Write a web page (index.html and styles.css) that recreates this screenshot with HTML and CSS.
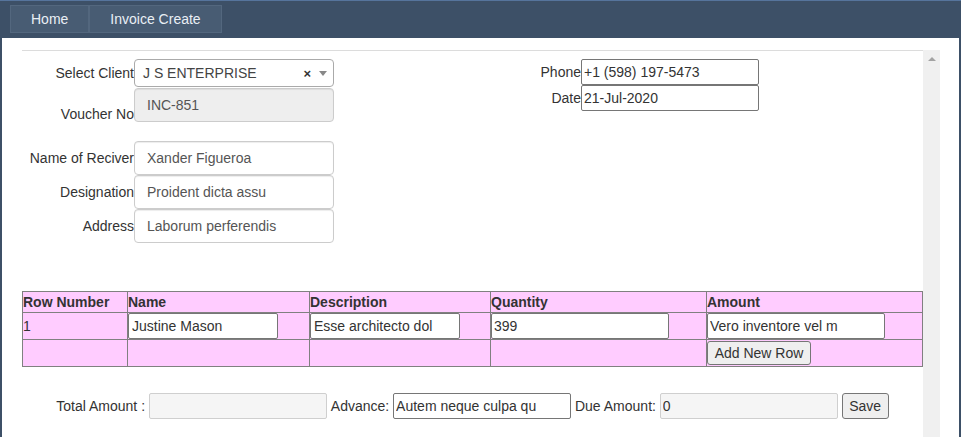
FILE: index.html
```html
<!DOCTYPE html>
<html>
<head>
<meta charset="utf-8">
<title>Invoice Create</title>
<link rel="stylesheet" href="styles.css">
</head>
<body>
<div class="frame">
  <nav class="topbar">
    <a class="tab">Home</a><a class="tab">Invoice Create</a>
  </nav>
  <div class="page">
    <div class="scroll">
      <div class="content">
        <div class="form-top">
          <div class="col-left">
            <div class="field f-client">
              <label class="lbl">Select Client</label>
              <div class="s2">
                <span class="s2-text">J S ENTERPRISE</span>
                <span class="s2-clear">×</span>
                <span class="s2-arrow"></span>
              </div>
            </div>
            <div class="field f-voucher">
              <label class="lbl lbl-bottom">Voucher No</label>
              <input class="fc fc-readonly" value="INC-851" readonly>
            </div>
            <div class="field f-first">
              <label class="lbl">Name of Reciver</label>
              <input class="fc" value="Xander Figueroa">
            </div>
            <div class="field">
              <label class="lbl">Designation</label>
              <input class="fc" value="Proident dicta assu">
            </div>
            <div class="field">
              <label class="lbl">Address</label>
              <input class="fc" value="Laborum perferendis">
            </div>
          </div>
          <div class="col-right">
            <div class="field">
              <label class="lbl lbl-r">Phone</label>
              <input class="pi pi-wide" value="+1 (598) 197-5473">
            </div>
            <div class="field">
              <label class="lbl lbl-r">Date</label>
              <input class="pi pi-wide" value="21-Jul-2020">
            </div>
          </div>
        </div>

        <table class="items">
          <colgroup>
            <col class="c1"><col class="c2"><col class="c3"><col class="c4"><col class="c5">
          </colgroup>
          <thead>
            <tr class="hrow">
              <th>Row Number</th><th>Name</th><th>Description</th><th>Quantity</th><th>Amount</th>
            </tr>
          </thead>
          <tbody>
            <tr class="drow">
              <td>1</td>
              <td><input class="pi pi-narrow" value="Justine Mason"></td>
              <td><input class="pi pi-narrow" value="Esse architecto dol"></td>
              <td><input class="pi pi-wide" value="399"></td>
              <td><input class="pi pi-wide" value="Vero inventore vel m"></td>
            </tr>
            <tr class="brow">
              <td></td><td></td><td></td><td></td>
              <td><button class="btn btn-add">Add New Row</button></td>
            </tr>
          </tbody>
        </table>

        <div class="totals">
          <label>Total Amount :</label> <input class="pi pi-wide pi-ro" readonly> <label>Advance:</label> <input class="pi pi-wide" value="Autem neque culpa qu"> <label>Due Amount:</label> <input class="pi pi-wide pi-ro" value="0" readonly> <button class="btn btn-save">Save</button>
        </div>
      </div>
    </div>
    <div class="vbar"><span class="vbar-up"></span></div>
  </div>
</div>
</body>
</html>
```

FILE: styles.css
```css
* { box-sizing: border-box; }
html, body { margin: 0; padding: 0; height: 100%; overflow: hidden; }
body {
  font-family: "Liberation Sans", Arial, sans-serif;
  font-size: 14px;
  color: #333;
  background: #fff;
}

.frame {
  height: 437px;
  display: flex;
  flex-direction: column;
  border-left: 2px solid #3d5067;
  border-right: 2px solid #3d5067;
}

.topbar {
  height: 38px;
  flex: none;
  background: #3d5067;
  border-top: 1px solid #56749c;
  padding: 4px 0 0 10px;
  margin: 0 -2px;
  display: flex;
  align-items: flex-start;
}
.tab {
  height: 28px;
  line-height: 26px;
  padding: 0 20px;
  background: #485c73;
  border: 1px solid #53677e;
  color: #e9eff5;
  font-size: 14px;
}

.page {
  flex: 1;
  display: flex;
  padding: 12px 19px 0 20px;
  min-height: 0;
}
.scroll {
  flex: 1;
  overflow: hidden;
}
.vbar {
  width: 17px;
  flex: none;
  background: #f0f0f0;
  display: flex;
  justify-content: center;
  padding-top: 7px;
}
.vbar-up {
  width: 0;
  height: 0;
  border-left: 4px solid transparent;
  border-right: 4px solid transparent;
  border-bottom: 4px solid #a3a3a3;
}

.content {
  border-top: 1px solid #dcdcdc;
  padding-top: 8px;
}

.form-top {
  display: flex;
}
.col-left { width: 450px; }
.col-right { flex: 1; }

.field {
  display: flex;
  align-items: center;
}
.lbl {
  width: 112px;
  text-align: right;
  flex: none;
  color: #333;
}
.lbl-r { width: 109px; }
.lbl-bottom { align-self: flex-end; line-height: 16px; }
.f-voucher { margin-top: 1px; }
.f-first { margin-top: 19px; }

.s2 {
  width: 200px;
  height: 28px;
  border: 1px solid #aaa;
  border-radius: 4px;
  display: flex;
  align-items: center;
  padding-left: 8px;
  color: #444;
  background: #fff;
}
.s2-text { flex: 1; }
.s2-clear {
  font-weight: bold;
  font-size: 13px;
  color: #333;
  margin-right: 8px;
}
.s2-arrow {
  width: 0;
  height: 0;
  border-left: 4px solid transparent;
  border-right: 4px solid transparent;
  border-top: 5px solid #888;
  margin-right: 6px;
}

.fc {
  width: 200px;
  height: 34px;
  padding: 6px 12px;
  font: 14px "Liberation Sans", Arial, sans-serif;
  color: #555;
  background: #fff;
  border: 1px solid #ccc;
  border-radius: 4px;
  box-shadow: inset 0 1px 1px rgba(0,0,0,.075);
  outline: none;
}
.fc-readonly { background: #eee; }

.pi {
  height: 26px;
  padding: 1px 2px;
  font: 14px "Liberation Sans", Arial, sans-serif;
  color: #333;
  background: #fff;
  border: 1px solid #767676;
  border-radius: 2px;
  outline: none;
  vertical-align: middle;
}
.pi-wide { width: 178px; }
.pi-narrow { width: 150px; padding-left: 3px; }
.pi-ro { background: #f5f5f5; border-color: #cfcfcf; }

.items {
  margin-top: 48px;
  width: 900px;
  table-layout: fixed;
  border-collapse: collapse;
  background: #ffccff;
}
.items th, .items td {
  border: 1px solid #808080;
  padding: 0;
  text-align: left;
  vertical-align: middle;
  color: #333;
}
.items th { font-weight: bold; }
.c1 { width: 105px; }
.c2 { width: 182px; }
.c3 { width: 181px; }
.c4 { width: 216px; }
.c5 { width: 216px; }
.hrow { height: 21px; }
.drow { height: 27px; }
.brow { height: 27px; }
.drow .pi { display: block; }

.btn {
  font: 14px "Liberation Sans", Arial, sans-serif;
  color: #333;
  background: #efefef;
  border: 1px solid #767676;
  border-radius: 3px;
  padding: 0 6px;
  vertical-align: middle;
}
.btn-add { height: 24px; width: 104px; display: block; }
.btn-save { height: 26px; width: 47px; }

.totals {
  margin-top: 26px;
  text-align: center;
  white-space: nowrap;
}
.totals label { vertical-align: middle; }
```
